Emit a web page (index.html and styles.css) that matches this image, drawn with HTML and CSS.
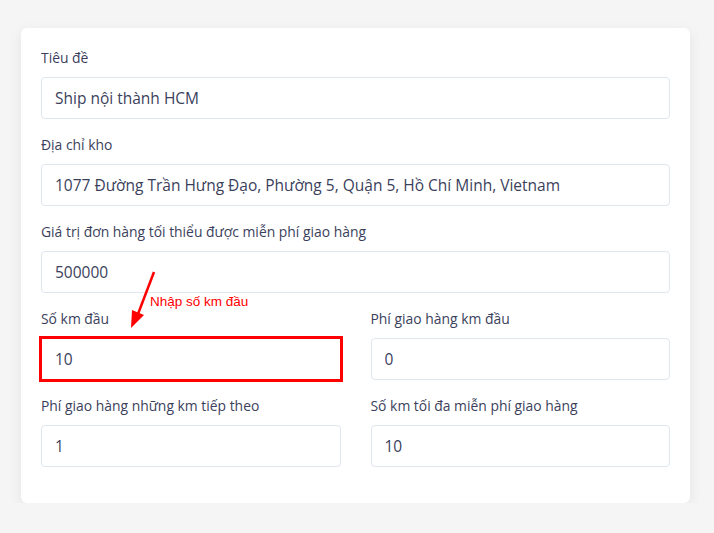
FILE: index.html
```html
<!DOCTYPE html>
<html lang="vi">
<head>
  <meta charset="UTF-8">
  <meta name="viewport" content="width=device-width, initial-scale=1">
  <title>Cài đặt giao hàng</title>
  <link rel="stylesheet" href="styles.css">
</head>
<body>

  <div class="card">
    <div class="form-group">
      <label>Tiêu đề</label>
      <input class="form-control" type="text" value="Ship nội thành HCM">
    </div>

    <div class="form-group">
      <label>Địa chỉ kho</label>
      <input class="form-control" type="text" value="1077 Đường Trần Hưng Đạo, Phường 5, Quận 5, Hồ Chí Minh, Vietnam">
    </div>

    <div class="form-group">
      <label>Giá trị đơn hàng tối thiểu được miễn phí giao hàng</label>
      <input class="form-control" type="text" value="500000">
    </div>

    <div class="form-row">
      <div class="form-group">
        <label>Số km đầu</label>
        <input class="form-control highlight" type="text" value="10">
      </div>
      <div class="form-group">
        <label>Phí giao hàng km đầu</label>
        <input class="form-control" type="text" value="0">
      </div>
    </div>

    <div class="form-row">
      <div class="form-group">
        <label>Phí giao hàng những km tiếp theo</label>
        <input class="form-control" type="text" value="1">
      </div>
      <div class="form-group">
        <label>Số km tối đa miễn phí giao hàng</label>
        <input class="form-control" type="text" value="10">
      </div>
    </div>

    <!-- annotation -->
    <svg class="note-arrow" width="40" height="64" viewBox="0 0 40 64">
      <line x1="33" y1="2" x2="17" y2="44" stroke="#f00" stroke-width="2.5"/>
      <polygon points="10,58 11,40 23,45" fill="#f00"/>
    </svg>
    <span class="note-text">Nhập số km đầu</span>
  </div>

</body>
</html>
```

FILE: styles.css
```css
* {
  box-sizing: border-box;
}

body {
  margin: 0;
  background: #f5f5f5;
  font-family: 'Open Sans', 'Noto Sans', sans-serif;
}

.card {
  position: relative;
  background: #fff;
  width: 669px;
  margin: 28px 0 0 21px;
  padding: 20px;
  border-radius: 6px;
  box-shadow: 0 4px 14px rgba(0, 0, 0, 0.07);
}

.form-group {
  margin-bottom: 16px;
}

.form-group label {
  display: block;
  font-size: 13.9px;
  line-height: 20px;
  margin-bottom: 9px;
  color: #3b3f5c;
}

.form-row {
  display: grid;
  grid-template-columns: 1fr 1fr;
  gap: 30px;
}

.form-control {
  display: block;
  width: 100%;
  height: 42px;
  padding: 0 13px;
  border: 1px solid #e0e6ed;
  border-radius: 4px;
  font-family: inherit;
  font-size: 15.5px;
  color: #3b3f5c;
  background: #fff;
}

.highlight {
  border-radius: 0;
  outline: 3px solid #f00;
  outline-offset: -1px;
}

.note-arrow {
  position: absolute;
  left: 100px;
  top: 242px;
}

.note-text {
  position: absolute;
  left: 129px;
  top: 266px;
  font-family: 'Liberation Sans', Arial, sans-serif;
  font-size: 13.5px;
  color: #f00;
}
```
